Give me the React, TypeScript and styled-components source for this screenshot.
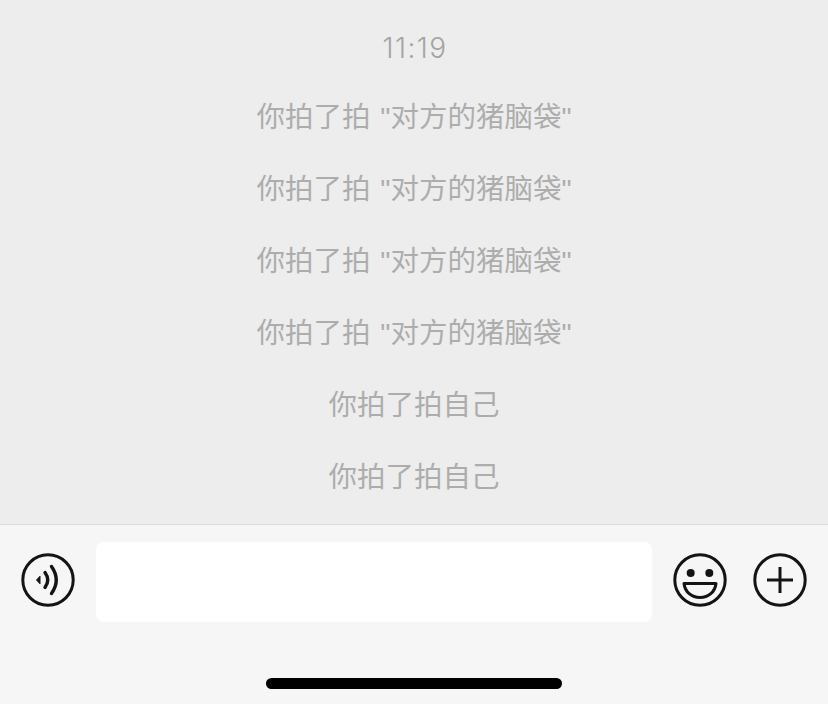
import styled, { createGlobalStyle } from 'styled-components';

const GlobalStyle = createGlobalStyle`
  html, body {
    margin: 0;
    padding: 0;
    background-color: #f6f6f6;
  }
`;

const Screen = styled.div`
  width: 828px;
  height: 704px;
  display: flex;
  flex-direction: column;
  overflow: hidden;
  font-family: 'Inter', 'Noto Sans CJK SC', sans-serif;
`;

const MessageList = styled.div`
  height: 524px;
  box-sizing: border-box;
  padding-top: 12px;
  background-color: #ededed;
  display: flex;
  flex-direction: column;
  align-items: center;
`;

const Notice = styled.div`
  height: 72px;
  line-height: 66px;
  font-size: 28.5px;
  word-spacing: 2px;
  color: #adadad;
  white-space: nowrap;
  font-family: 'Liberation Sans', 'Noto Sans CJK SC', sans-serif;
  font-weight: 400;
`;

const TimeLabel = styled(Notice)`
  font-family: 'Inter', sans-serif;
  font-weight: 300;
  font-size: 28px;
  line-height: 72px;
  letter-spacing: 1.4px;
  padding-left: 2px;
  color: #a4a4a4;
`;

const InputBar = styled.div`
  flex: 1;
  position: relative;
  background-color: #f6f6f6;
  border-top: 1px solid #dcdcdc;
  padding: 17px 20px 0 21px;
  display: flex;
  align-items: flex-start;
`;

const VoiceSlot = styled.div`
  margin-top: 11px;
  margin-right: 21px;
  display: flex;
`;

const TextBox = styled.div`
  width: 556px;
  height: 80px;
  background-color: #fff;
  border-radius: 8px;
  margin-right: 21px;
`;

const ActionSlots = styled.div`
  margin-top: 11px;
  display: flex;
  gap: 26px;
`;

const HomeIndicator = styled.div`
  position: absolute;
  left: 266px;
  bottom: 15px;
  width: 296px;
  height: 11px;
  border-radius: 6px;
  background-color: #000;
`;

const Icon = styled.svg`
  width: 54px;
  height: 54px;
  display: block;
  fill: none;
  stroke: #141414;
  stroke-width: 3;
`;

const VoiceIcon = () => (
  <Icon viewBox="0 0 54 54">
    <circle cx="27" cy="27" r="25.2" />
    <path d="M15.5 27 L19 23.2 V30.8 Z" fill="#141414" strokeWidth="1" strokeLinejoin="round" />
    <path d="M24 19.5 Q29.5 27 24 34.5" strokeWidth="3.4" strokeLinecap="round" />
    <path d="M30.5 13.5 Q40 27 30.5 40.5" strokeWidth="3.4" strokeLinecap="round" />
  </Icon>
);

const SmileIcon = () => (
  <Icon viewBox="0 0 54 54">
    <circle cx="27" cy="27" r="25.2" />
    <circle cx="17.7" cy="20" r="4" fill="#141414" stroke="none" />
    <circle cx="36.3" cy="20" r="4" fill="#141414" stroke="none" />
    <path d="M11 30.5 H43 C42 39 35.5 44.5 27 44.5 C18.5 44.5 12 39 11 30.5 Z" strokeLinejoin="round" />
  </Icon>
);

const PlusIcon = () => (
  <Icon viewBox="0 0 54 54">
    <circle cx="27" cy="27" r="25.2" />
    <path d="M14 27 H40 M27 14 V40" />
  </Icon>
);

const notices = [
  '你拍了拍 "对方的猪脑袋"',
  '你拍了拍 "对方的猪脑袋"',
  '你拍了拍 "对方的猪脑袋"',
  '你拍了拍 "对方的猪脑袋"',
  '你拍了拍自己',
  '你拍了拍自己',
];

const App = () => {
  return (
    <Screen>
      <GlobalStyle />
      <MessageList>
        <TimeLabel>11:19</TimeLabel>
        {notices.map((text, i) => (
          <Notice key={i}>{text}</Notice>
        ))}
      </MessageList>
      <InputBar>
        <VoiceSlot>
          <VoiceIcon />
        </VoiceSlot>
        <TextBox />
        <ActionSlots>
          <SmileIcon />
          <PlusIcon />
        </ActionSlots>
        <HomeIndicator />
      </InputBar>
    </Screen>
  );
};

export default App;
